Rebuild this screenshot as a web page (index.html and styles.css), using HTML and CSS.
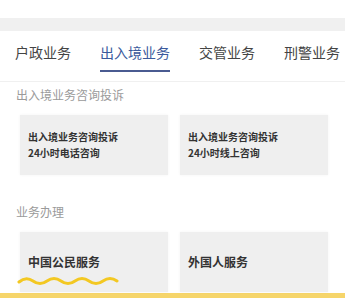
FILE: index.html
```html
<!DOCTYPE html>
<html lang="zh-CN">
<head>
  <meta charset="UTF-8" />
  <meta name="viewport" content="width=device-width, initial-scale=1.0"/>
  <title>业务办理</title>
  <link rel="stylesheet" href="styles.css">
</head>
<body>
  <div class="top"></div>
  <div class="band"></div>
  <nav class="tabs">
    <div class="tab">户政业务</div>
    <div class="tab active">出入境业务</div>
    <div class="tab">交管业务</div>
    <div class="tab">刑警业务</div>
  </nav>

  <div class="sec-title">出入境业务咨询投诉</div>
  <div class="cards">
    <div class="card small">
      <div>出入境业务咨询投诉</div>
      <div>24小时电话咨询</div>
    </div>
    <div class="card small">
      <div>出入境业务咨询投诉</div>
      <div>24小时线上咨询</div>
    </div>
  </div>

  <div class="sec-title second">业务办理</div>
  <div class="cards">
    <div class="card big">
      中国公民服务
      <svg class="wave" width="104" height="10" viewBox="0 0 104 10">
        <path d="M2 6 Q9 0 16 5 T30 5 T44 5 T58 5 T72 5 T86 5 T100 5" fill="none" stroke="#f3c822" stroke-width="3" stroke-linecap="round"/>
      </svg>
    </div>
    <div class="card big">外国人服务</div>
  </div>

  <div class="bottom-bar"></div>
</body>
</html>
```

FILE: styles.css
```css
body { margin: 0; background: #fff; font-family: "Noto Sans CJK SC", "Noto Sans", sans-serif; color: #333; overflow: hidden; }
.top { height: 18px; }
.band { height: 13px; background: #f0f0f0; }
.tabs { display: flex; gap: 29px; padding: 0 15px; height: 50px; border-bottom: 1px solid #f0f0f0; white-space: nowrap; }
.tab { box-sizing: border-box; height: 41px; padding-top: 11px; font-size: 14px; line-height: 20px; color: #444; }
.tab.active { color: #3b5a9c; border-bottom: 2px solid #4a5b91; }
.sec-title { padding: 5px 16px 0; font-size: 12px; line-height: 16px; color: #9a9a9a; }
.sec-title.second { margin-top: 24px; }
.cards { display: grid; grid-template-columns: 148px 148px; gap: 12px; margin: 12px 0 0 20px; }
.card { position: relative; box-sizing: border-box; height: 60px; padding-left: 8px; background: #efefef; box-shadow: 0 0 3px rgba(0, 0, 0, 0.05); font-weight: bold; color: #333; }
.card.small { padding-top: 14px; font-size: 10px; line-height: 16px; }
.card.big { padding-top: 20px; font-size: 12px; line-height: 20px; }
.wave { position: absolute; left: -3px; top: 44px; }
.bottom-bar { height: 6px; margin-top: 1px; background: #f6d56a; }
```
